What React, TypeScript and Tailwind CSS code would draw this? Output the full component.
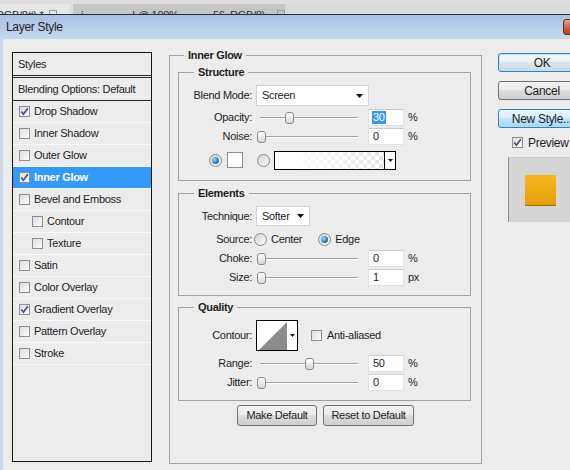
import type { ReactNode } from 'react';

const STYLES = [
  { label: 'Drop Shadow', checked: true },
  { label: 'Inner Shadow' },
  { label: 'Outer Glow' },
  { label: 'Inner Glow', checked: true, active: true },
  { label: 'Bevel and Emboss' },
  { label: 'Contour', sub: true },
  { label: 'Texture', sub: true },
  { label: 'Satin' },
  { label: 'Color Overlay' },
  { label: 'Gradient Overlay', checked: true },
  { label: 'Pattern Overlay' },
  { label: 'Stroke' },
];

const btnGray =
  'border border-[#707070] rounded-[3px] bg-[linear-gradient(#f2f2f2,#ebebeb_50%,#dddddd_50%,#cfcfcf)]';
const btnBlue =
  'border border-[#3c7fb1] rounded-[3px] bg-[linear-gradient(#eaf6fd,#d9f0fc_50%,#bee6fd_50%,#a7d9f5)]';

function Check({ checked }: { checked?: boolean }) {
  return (
    <span className="flex h-[11px] w-[11px] shrink-0 items-center justify-center border border-[#8e8f8f] bg-[linear-gradient(135deg,#dcdcdc,#fbfbfb)]">
      {checked && (
        <svg width="9" height="9" viewBox="0 0 9 9">
          <path d="M1.3 4.6 L3.4 7.2 L7.8 1.2" fill="none" stroke="#3b4b8c" strokeWidth="1.6" />
        </svg>
      )}
    </span>
  );
}

function Radio({ on }: { on?: boolean }) {
  return (
    <span className="flex h-[13px] w-[13px] shrink-0 items-center justify-center rounded-full border border-[#8a8a8a] bg-[linear-gradient(135deg,#d4d4d4,#fbfbfb)]">
      {on && <span className="h-[7px] w-[7px] rounded-full bg-[radial-gradient(circle_at_35%_35%,#9bd6f7,#1a6ea8_70%)]" />}
    </span>
  );
}

function Arrow({ w = 7, h = 4 }: { w?: number; h?: number }) {
  return (
    <svg width={w} height={h} viewBox={`0 0 ${w} ${h}`}>
      <path d={`M0 0H${w}L${w / 2} ${h}Z`} fill="#111" />
    </svg>
  );
}

function Select({ value, w }: { value: string; w: string }) {
  return (
    <div className={`flex h-full items-center justify-between border border-[#d4d4d4] bg-white pl-[5px] pr-[5px] ${w}`}>
      <span>{value}</span>
      <Arrow />
    </div>
  );
}

function Slider({ amount }: { amount: number }) {
  return (
    <div className="relative h-[19px] w-[106px]">
      <div className="absolute left-[4px] right-[4px] top-[9px] h-[2px] border-t border-b border-t-[#a3a3a3] border-b-white" />
      <div
        className="absolute top-[4px] h-[12px] w-[9px] rounded-[3px] border border-[#8c8c8c] bg-[linear-gradient(#ffffff,#d6d6d6)]"
        style={{ left: 0.5 + amount * 96 }}
      />
    </div>
  );
}

function NumBox({ value, selected }: { value: string; selected?: boolean }) {
  return (
    <div className="flex h-[17px] w-[36px] items-center border border-[#e2e2e2] border-t-[#cdcdcd] bg-white pl-[3px]">
      {selected ? <span className="bg-[#3399ff] px-[1px] leading-[13px] text-white">{value}</span> : <span className="pl-[1px]">{value}</span>}
    </div>
  );
}

function SliderRow({ label, amount, value, unit, selected }: { label: string; amount: number; value: string; unit: string; selected?: boolean }) {
  return (
    <div className="flex h-[19px] items-center">
      <span className="w-[73px] text-right">{label}</span>
      <div className="ml-[4px]">
        <Slider amount={amount} />
      </div>
      <div className="ml-[6px]">
        <NumBox value={value} selected={selected} />
      </div>
      <span className="ml-[4px]">{unit}</span>
    </div>
  );
}

function Group({ title, className, children }: { title: string; className: string; children: ReactNode }) {
  return (
    <fieldset className={`border border-[#a2a2a2] ${className}`}>
      <legend className="ml-[15px] px-[4px] text-[11px] font-bold leading-[13px]">{title}</legend>
      {children}
    </fieldset>
  );
}

export default function App() {
  return (
    <div className="relative h-[470px] w-[570px] overflow-hidden bg-[#ececec] font-['Liberation_Sans',Arial,sans-serif] text-[11px] tracking-[-0.3px] text-[#1e1e1e]">
      {/* tab strip behind the dialog */}
      <div className="h-[15px] overflow-hidden border-b border-[#2f2f2f] bg-[#dedede]">
        <div className="mt-[4px] flex h-[11px] text-[11px] leading-[11px] text-[#333]">
          <div className="flex w-[70px] bg-[#e6e6e6] pt-[6px]">
            <span className="ml-[-4px]">RGB/8#) *</span>
            <span className="ml-[6px] h-[8px] w-[8px] border border-[#999]" />
          </div>
          <div className="ml-[3px] flex w-[212px] gap-[4px] bg-[#c6c6c6] pt-[6px] pl-[8px]">
            <span>i</span>
            <span className="ml-[45px]">L@ 100% (L</span>
            <span className="ml-[20px]">56, RGB/8) *</span>
            <span className="ml-[3px] h-[8px] w-[8px] border border-[#999]" />
          </div>
          <div className="flex-1 bg-[#dadada]" />
        </div>
      </div>

      {/* title bar */}
      <div className="flex h-[24px] items-center bg-[linear-gradient(#a7c2e1,#c5d9ef)]">
        <span className="ml-[6px] text-[12px]">Layer Style</span>
        <div className="ml-auto mr-[-36px] h-[16px] w-[43px] shrink-0 rounded-[3px] border border-[#6d2a20] bg-[linear-gradient(#e4a294,#d0624f_50%,#c0402c)]" />
      </div>

      {/* body */}
      <div className="flex h-[431px] items-start border-l-[3px] border-[#c6d7ec] pl-[9px]">
        {/* styles list */}
        <div className="mt-[13px] h-[410px] w-[140px] shrink-0 border border-[#151515]">
          <div className="flex h-[25px] items-center border-b-[3px] border-double border-[#2a2a2a] pl-[5px]">Styles</div>
          <div className="flex h-[23px] items-center border-b border-[#2a2a2a] pl-[5px]">Blending Options: Default</div>
          {STYLES.map((s) => (
            <div
              key={s.label}
              className={`flex h-[22px] items-center gap-[4px] border-b border-[#fafafa] ${s.sub ? 'pl-[19px]' : 'pl-[6px]'} ${
                s.active ? 'bg-[#3399ff] font-bold text-white' : ''
              }`}
            >
              <Check checked={s.checked} />
              <span>{s.label}</span>
            </div>
          ))}
        </div>

        {/* inner glow settings */}
        <fieldset className="ml-[17px] mt-[10px] h-[415px] w-[313px] shrink-0 border border-[#a2a2a2]">
          <legend className="ml-[14px] px-[4px] text-[11px] font-bold leading-[13px]">Inner Glow</legend>

          <Group title="Structure" className="ml-[8px] mt-[4px] h-[115px] w-[293px]">
            <div className="mt-[6px] flex h-[21px] items-center">
              <span className="w-[73px] text-right">Blend Mode:</span>
              <div className="ml-[4px] h-full">
                <Select value="Screen" w="w-[113px]" />
              </div>
            </div>
            <div className="mt-[2px]">
              <SliderRow label="Opacity:" amount={0.3} value="30" unit="%" selected />
              <SliderRow label="Noise:" amount={0} value="0" unit="%" />
            </div>
            <div className="mt-[4px] flex h-[20px] items-center pl-[30px]">
              <Radio on />
              <span className="ml-[5px] h-[16px] w-[16px] border border-[#8c8c8c] bg-white" />
              <span className="ml-[14px]">
                <Radio />
              </span>
              <div className="ml-[4px] flex h-[19px] w-[122px] border border-black">
                <div className="flex-1 bg-[conic-gradient(#e2e2e2_25%,#ffffff_0_50%,#e2e2e2_0_75%,#ffffff_0)] bg-[length:8px_8px]">
                  <div className="h-full w-full bg-[linear-gradient(to_right,#ffffff_15%,rgba(255,255,255,0))]" />
                </div>
                <div className="flex w-[11px] items-center justify-center border-l border-black bg-white">
                  <Arrow w={5} h={3} />
                </div>
              </div>
            </div>
          </Group>

          <Group title="Elements" className="ml-[8px] mt-[6px] h-[109px] w-[293px]">
            <div className="mt-[6px] flex h-[20px] items-center">
              <span className="w-[73px] text-right">Technique:</span>
              <div className="ml-[4px] h-full">
                <Select value="Softer" w="w-[54px]" />
              </div>
            </div>
            <div className="mt-[4px] flex h-[18px] items-center">
              <span className="w-[73px] text-right">Source:</span>
              <span className="ml-[2px]">
                <Radio />
              </span>
              <span className="ml-[4px]">Center</span>
              <span className="ml-[16px]">
                <Radio on />
              </span>
              <span className="ml-[4px]">Edge</span>
            </div>
            <div className="mt-[1px]">
              <SliderRow label="Choke:" amount={0} value="0" unit="%" />
              <SliderRow label="Size:" amount={0} value="1" unit="px" />
            </div>
          </Group>

          <Group title="Quality" className="ml-[8px] mt-[5px] h-[100px] w-[293px]">
            <div className="mt-[6px] flex h-[31px] items-center">
              <span className="w-[73px] text-right">Contour:</span>
              <div className="ml-[4px] flex h-[31px] w-[42px] border border-black bg-white">
                <svg width="30" height="29" viewBox="0 0 30 29" className="mt-[0px]">
                  <polygon points="2,29 30,1 30,29" fill="#8c8c8c" />
                </svg>
                <div className="flex flex-1 items-center justify-center">
                  <Arrow w={5} h={3} />
                </div>
              </div>
              <span className="ml-[13px]">
                <Check />
              </span>
              <span className="ml-[5px]">Anti-aliased</span>
            </div>
            <div className="mt-[3px]">
              <SliderRow label="Range:" amount={0.5} value="50" unit="%" />
              <SliderRow label="Jitter:" amount={0} value="0" unit="%" />
            </div>
          </Group>

          <div className="mt-[4px] flex justify-center gap-[6px]">
            <button type="button" className={`h-[21px] w-[80px] ${btnGray}`}>
              Make Default
            </button>
            <button type="button" className={`h-[21px] w-[91px] ${btnGray}`}>
              Reset to Default
            </button>
          </div>
        </fieldset>

        {/* right column */}
        <div className="ml-[16px] mt-[14px] flex w-[88px] shrink-0 flex-col text-[12px]">
          <button type="button" className={`h-[19px] w-[88px] border border-[#3c7fb1] rounded-[3px] bg-[linear-gradient(#f4f9fc,#e9f0f5_50%,#dce5ec_50%,#cfdbe3)] shadow-[inset_0_0_0_1px_#b7e3f8]`}>
            OK
          </button>
          <button type="button" className={`mt-[9px] h-[19px] w-[88px] ${btnGray}`}>
            Cancel
          </button>
          <button type="button" className={`mt-[9px] h-[19px] w-[88px] ${btnBlue}`}>
            New Style...
          </button>
          <div className="ml-[14px] mt-[9px] flex h-[11px] items-center gap-[5px]">
            <Check checked />
            <span>Preview</span>
          </div>
          <div className="ml-[10px] mt-[9px] h-[65px] w-[70px] border-l border-t border-l-[#8f8f8f] border-t-[#c8c8c8] bg-[#d5d5d5] pl-[16px] pt-[17px]">
            <div className="h-[31px] w-[31px] border-b border-[#a06b08] bg-[linear-gradient(#f6b71a,#e69d0b)]" />
          </div>
        </div>
      </div>
    </div>
  );
}
